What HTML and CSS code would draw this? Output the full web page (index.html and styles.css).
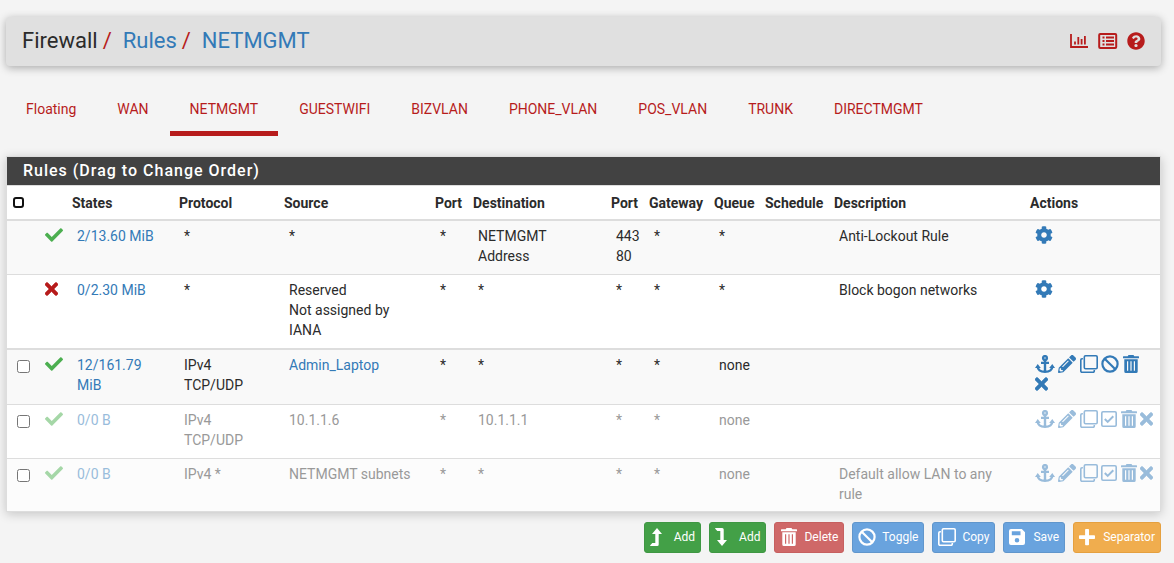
FILE: index.html
```html
<!DOCTYPE html>
<html lang="en">
<head>
<meta charset="utf-8">
<title>Firewall: Rules: NETMGMT</title>
<link rel="stylesheet" href="styles.css">
</head>
<body>
<svg class="sprite" aria-hidden="true">
  <symbol id="check" viewBox="0 0 512 512"><path d="M173.898 439.404l-166.4-166.4c-9.997-9.997-9.997-26.206 0-36.204l36.203-36.204c9.997-9.998 26.207-9.998 36.204 0L192 312.69 432.095 72.596c9.997-9.997 26.207-9.997 36.204 0l36.203 36.204c9.997 9.997 9.997 26.206 0 36.204l-294.4 294.401c-9.998 9.997-26.207 9.997-36.204-.001z"/></symbol>
  <symbol id="times" viewBox="0 70 352 372"><path stroke="currentColor" stroke-width="14" d="M242.72 256l100.07-100.07c12.28-12.28 12.28-32.19 0-44.48l-22.24-22.24c-12.28-12.28-32.19-12.28-44.48 0L176 189.28 75.93 89.21c-12.28-12.28-32.19-12.28-44.48 0L9.21 111.45c-12.28 12.28-12.28 32.19 0 44.48L109.28 256 9.21 356.07c-12.28 12.28-12.28 32.19 0 44.48l22.24 22.24c12.28 12.28 32.2 12.28 44.48 0L176 322.72l100.07 100.07c12.28 12.28 32.2 12.28 44.48 0l22.24-22.24c12.28-12.28 12.28-32.19 0-44.48L242.72 256z"/></symbol>
  <symbol id="cog" viewBox="0 0 512 512"><path d="M487.4 315.7l-42.6-24.6c4.3-23.2 4.3-47 0-70.2l42.6-24.6c4.9-2.8 7.1-8.6 5.5-14-11.1-35.6-30-67.8-54.7-94.6-3.8-4.1-10-5.1-14.8-2.3L380.8 110c-17.9-15.4-38.5-27.3-60.8-35.1V25.8c0-5.6-3.9-10.5-9.4-11.7-36.7-8.2-74.3-7.8-109.2 0-5.5 1.2-9.4 6.1-9.4 11.7V75c-22.2 7.9-42.8 19.8-60.8 35.1L88.7 85.5c-4.9-2.8-11-1.9-14.8 2.3-24.7 26.7-43.6 58.9-54.7 94.6-1.7 5.4.6 11.2 5.5 14L67.3 221c-4.3 23.2-4.3 47 0 70.2l-42.6 24.6c-4.9 2.8-7.1 8.6-5.5 14 11.1 35.6 30 67.8 54.7 94.6 3.8 4.1 10 5.1 14.8 2.3l42.6-24.6c17.9 15.4 38.5 27.3 60.8 35.1v49.2c0 5.6 3.9 10.5 9.4 11.7 36.7 8.2 74.3 7.8 109.2 0 5.5-1.2 9.4-6.1 9.4-11.7v-49.2c22.2-7.9 42.8-19.8 60.8-35.1l42.6 24.6c4.9 2.8 11 1.9 14.8-2.3 24.7-26.7 43.6-58.9 54.7-94.6 1.5-5.5-.7-11.3-5.6-14.1zM256 336c-44.1 0-80-35.9-80-80s35.9-80 80-80 80 35.9 80 80-35.9 80-80 80z"/></symbol>
  <symbol id="help" viewBox="0 0 512 512"><path d="M504 256c0 136.997-111.043 248-248 248S8 392.997 8 256C8 119.083 119.043 8 256 8s248 111.083 248 248zM262.655 90c-54.497 0-89.255 22.957-116.549 63.758-3.536 5.286-2.353 12.415 2.715 16.258l34.699 26.31c5.205 3.947 12.621 3.008 16.665-2.122 17.864-22.658 30.113-35.797 57.303-35.797 20.429 0 45.698 13.148 45.698 32.958 0 14.976-12.363 22.667-32.534 33.976C247.128 238.528 216 254.941 216 296v4c0 6.627 5.373 12 12 12h56c6.627 0 12-5.373 12-12v-1.333c0-28.462 83.186-29.647 83.186-106.667 0-58.002-60.165-102-116.531-102zM256 338c-25.365 0-46 20.635-46 46 0 25.364 20.635 46 46 46s46-20.636 46-46c0-25.365-20.635-46-46-46z"/></symbol>
  <symbol id="pencil" viewBox="0 0 512 512"><path d="M497.9 142.1l-46.1 46.1c-4.7 4.7-12.3 4.7-17 0l-111-111c-4.7-4.7-4.7-12.3 0-17l46.1-46.1c18.7-18.7 49.1-18.7 67.9 0l60.1 60.1c18.8 18.7 18.8 49.1 0 67.9zM284.2 99.8L21.6 362.4.4 483.9c-2.9 16.4 11.4 30.6 27.8 27.8l121.5-21.3 262.6-262.6c4.7-4.7 4.7-12.3 0-17l-111-111c-4.8-4.7-12.4-4.7-17.1 0zM124.1 339.9c-5.5-5.5-5.5-14.3 0-19.8l154-154c5.5-5.5 14.3-5.5 19.8 0s5.5 14.3 0 19.8l-154 154c-5.5 5.5-14.3 5.5-19.8 0zM88 424h48v36.3l-64.5 11.3-31.1-31.1L51.7 376H88v48z"/></symbol>
  <symbol id="anchor" viewBox="0 0 20 18"><g fill="none" stroke="currentColor" stroke-width="2.4"><circle cx="10" cy="3" r="1.900"/><path d="M10 5v12M6 7.900h8M2.600 11.500c.3 3.400 3.400 5.300 7.400 5.300s7.100-1.900 7.400-5.300"/></g><path d="M2.700 9 5.800 13H0zM17.300 9l2.700 4h-5.800z"/></symbol>
  <symbol id="clone" viewBox="0 0 18 18"><g fill="none" stroke="currentColor" stroke-width="1.6"><rect x="4.300" y=".8" width="12.900" height="12.900" rx="1.200"/><path d="M2.900 3.700H2A1.200 1.200 0 0 0 .8 4.900V16A1.200 1.200 0 0 0 2 17.200h11.100a1.200 1.200 0 0 0 1.200-1.200v-.9"/></g></symbol>
  <symbol id="ban" viewBox="0 0 18 18"><g fill="none" stroke="currentColor" stroke-width="2.2"><circle cx="9" cy="9" r="7.600"/><path d="m3.700 3.700 10.600 10.600"/></g></symbol>
  <symbol id="trash" viewBox="0 0 16 18"><path fill-rule="evenodd" d="M5.500 0h5l.8 1.200H15.500a.5.5 0 0 1 .5.5v1.600H0V1.700a.5.5 0 0 1 .5-.5h4.200zM1.300 4.200h13.400v12.200a1.600 1.600 0 0 1-1.600 1.600H2.900a1.600 1.600 0 0 1-1.600-1.600zM4 6.300v9.400h1.200V6.300zm3.400 0v9.400h1.200V6.300zm3.400 0v9.400H12V6.300z"/></symbol>
  <symbol id="tick" viewBox="0 0 16 18"><g fill="none" stroke="currentColor" stroke-width="1.600"><rect x=".8" y="1.800" width="14.400" height="14.400" rx="1.200"/><path d="m3.800 9 2.900 2.900 5.600-5.600" stroke-width="2"/></g></symbol>
  <symbol id="chart" viewBox="0 0 20 18"><path fill="none" stroke="currentColor" stroke-width="1.800" d="M2 2v13h17M6 12.500V9.500M9.300 12.500V5M12.600 12.500V7M15.900 12.500V4"/></symbol>
  <symbol id="list" viewBox="0 0 20 18"><rect x="1.200" y="1.900" width="17" height="14.200" rx="1" fill="none" stroke="currentColor" stroke-width="2"/><path fill="none" stroke="currentColor" stroke-width="1.800" d="M4.500 5.500h2M4.500 9h2M4.500 12.500h2M8 5.500h8M8 9h8M8 12.500h8"/></symbol>
  <symbol id="up" viewBox="0 0 18 18"><path d="M7 0l5 6H8.700v10.500A1.500 1.500 0 0 1 7.200 18H.5L0 17.400 2.300 15h3V6H2z"/></symbol>
  <symbol id="down" viewBox="0 0 18 18"><path d="M7 18l5-6H8.700V1.500A1.500 1.500 0 0 0 7.200 0H.5L0 .6 2.300 3h3v9H2z"/></symbol>
  <symbol id="save" viewBox="0 0 18 18"><path fill-rule="evenodd" d="M2 1h10.800L16 4.200V15a2 2 0 0 1-2 2H2a2 2 0 0 1-2-2V3a2 2 0 0 1 2-2zm.8 2.300v4h8.700v-4zM8 10a2.300 2.300 0 1 0 0 4.600A2.300 2.300 0 0 0 8 10z"/></symbol>
  <symbol id="plus" viewBox="0 0 18 18"><path d="M6.900 1h2.300a.8.8 0 0 1 .8.8v5.400h5.200a.8.8 0 0 1 .8.800v2.300a.8.800 0 0 1-.8.800H10v5.400a.8.800 0 0 1-.8.800H6.900a.8.800 0 0 1-.8-.8v-5.400H.8A.8.800 0 0 1 0 10.300V8a.8.800 0 0 1 .8-.8h5.300V1.800A.8.800 0 0 1 6.900 1z"/></symbol>
</svg>

<header class="page-header">
  <ol class="breadcrumb">
    <li>Firewall</li>
    <li><a href="#">Rules</a></li>
    <li><a href="#">NETMGMT</a></li>
  </ol>
  <nav class="header-links" aria-label="Page links">
    <a href="#" aria-label="Status"><svg class="icon wide"><use href="#chart"/></svg></a>
    <a href="#" aria-label="Logs"><svg class="icon wide"><use href="#list"/></svg></a>
    <a href="#" aria-label="Help"><svg class="icon"><use href="#help"/></svg></a>
  </nav>
</header>

<nav class="tabs" aria-label="Interfaces">
  <a href="#">Floating</a>
  <a href="#">WAN</a>
  <a href="#" class="active" aria-current="page">NETMGMT</a>
  <a href="#">GUESTWIFI</a>
  <a href="#">BIZVLAN</a>
  <a href="#">PHONE_VLAN</a>
  <a href="#">POS_VLAN</a>
  <a href="#">TRUNK</a>
  <a href="#">DIRECTMGMT</a>
</nav>

<main>
  <section class="panel">
    <h2 class="panel-title">Rules (Drag to Change Order)</h2>
    <table class="rules">
      <colgroup>
        <col class="c-select"><col class="c-status"><col class="c-states"><col class="c-protocol"><col class="c-source"><col class="c-port"><col class="c-dest"><col class="c-port"><col class="c-gateway"><col class="c-queue"><col class="c-schedule"><col><col class="c-actions">
      </colgroup>
      <thead>
        <tr>
          <th><input type="checkbox" class="select-all" aria-label="Select all"></th>
          <th></th>
          <th>States</th><th>Protocol</th><th>Source</th><th>Port</th><th>Destination</th><th>Port</th><th>Gateway</th><th>Queue</th><th>Schedule</th><th>Description</th><th>Actions</th>
        </tr>
      </thead>
      <tbody>
        <tr class="shaded">
          <td></td>
          <td><svg class="icon pass"><use href="#check"/></svg></td>
          <td><a href="#">2/13.60 MiB</a></td>
          <td>*</td><td>*</td><td>*</td><td>NETMGMT Address</td><td>443<br>80</td><td>*</td><td>*</td><td></td>
          <td>Anti-Lockout Rule</td>
          <td><a href="#" aria-label="Settings"><svg class="icon"><use href="#cog"/></svg></a></td>
        </tr>
        <tr>
          <td></td>
          <td><svg class="icon narrow block"><use href="#times"/></svg></td>
          <td><a href="#">0/2.30 MiB</a></td>
          <td>*</td><td>Reserved<br>Not assigned by IANA</td><td>*</td><td>*</td><td>*</td><td>*</td><td>*</td><td></td>
          <td>Block bogon networks</td>
          <td><a href="#" aria-label="Settings"><svg class="icon"><use href="#cog"/></svg></a></td>
        </tr>
      </tbody>
      <tbody class="user-rules">
        <tr class="shaded">
          <td><input type="checkbox" aria-label="Select rule 1"></td>
          <td><svg class="icon pass"><use href="#check"/></svg></td>
          <td><a href="#">12/161.79 MiB</a></td>
          <td>IPv4 TCP/UDP</td><td><a href="#">Admin_Laptop</a></td><td>*</td><td>*</td><td>*</td><td>*</td><td>none</td><td></td><td></td>
          <td>
            <a href="#" aria-label="Move"><svg class="icon wide"><use href="#anchor"/></svg></a>
            <a href="#" aria-label="Edit"><svg class="icon"><use href="#pencil"/></svg></a>
            <a href="#" aria-label="Copy"><svg class="icon"><use href="#clone"/></svg></a>
            <a href="#" aria-label="Disable"><svg class="icon"><use href="#ban"/></svg></a>
            <a href="#" aria-label="Delete"><svg class="icon mid"><use href="#trash"/></svg></a>
            <a href="#" aria-label="Clear states"><svg class="icon narrow"><use href="#times"/></svg></a>
          </td>
        </tr>
        <tr class="disabled">
          <td><input type="checkbox" aria-label="Select rule 2"></td>
          <td><svg class="icon pass"><use href="#check"/></svg></td>
          <td><a href="#">0/0 B</a></td>
          <td>IPv4 TCP/UDP</td><td>10.1.1.6</td><td>*</td><td>10.1.1.1</td><td>*</td><td>*</td><td>none</td><td></td><td></td>
          <td>
            <a href="#" aria-label="Move"><svg class="icon wide"><use href="#anchor"/></svg></a>
            <a href="#" aria-label="Edit"><svg class="icon"><use href="#pencil"/></svg></a>
            <a href="#" aria-label="Copy"><svg class="icon"><use href="#clone"/></svg></a>
            <a href="#" aria-label="Enable"><svg class="icon mid"><use href="#tick"/></svg></a>
            <a href="#" aria-label="Delete"><svg class="icon mid"><use href="#trash"/></svg></a>
            <a href="#" aria-label="Clear states"><svg class="icon narrow"><use href="#times"/></svg></a>
          </td>
        </tr>
        <tr class="shaded disabled">
          <td><input type="checkbox" aria-label="Select rule 3"></td>
          <td><svg class="icon pass"><use href="#check"/></svg></td>
          <td><a href="#">0/0 B</a></td>
          <td>IPv4 *</td><td>NETMGMT subnets</td><td>*</td><td>*</td><td>*</td><td>*</td><td>none</td><td></td>
          <td>Default allow LAN to any rule</td>
          <td>
            <a href="#" aria-label="Move"><svg class="icon wide"><use href="#anchor"/></svg></a>
            <a href="#" aria-label="Edit"><svg class="icon"><use href="#pencil"/></svg></a>
            <a href="#" aria-label="Copy"><svg class="icon"><use href="#clone"/></svg></a>
            <a href="#" aria-label="Enable"><svg class="icon mid"><use href="#tick"/></svg></a>
            <a href="#" aria-label="Delete"><svg class="icon mid"><use href="#trash"/></svg></a>
            <a href="#" aria-label="Clear states"><svg class="icon narrow"><use href="#times"/></svg></a>
          </td>
        </tr>
      </tbody>
    </table>
  </section>

  <div class="actions">
    <button type="button" class="btn add"><svg class="icon"><use href="#up"/></svg>Add</button>
    <button type="button" class="btn add"><svg class="icon"><use href="#down"/></svg>Add</button>
    <button type="button" class="btn delete"><svg class="icon"><use href="#trash"/></svg>Delete</button>
    <button type="button" class="btn info"><svg class="icon"><use href="#ban"/></svg>Toggle</button>
    <button type="button" class="btn info"><svg class="icon"><use href="#clone"/></svg>Copy</button>
    <button type="button" class="btn info"><svg class="icon"><use href="#save"/></svg>Save</button>
    <button type="button" class="btn separator"><svg class="icon"><use href="#plus"/></svg>Separator</button>
  </div>
</main>
</body>
</html>
```
FILE: styles.css
```css
* { box-sizing: border-box; }

body {
  margin: 0;
  padding: 17px 13px 10px 6px;
  background: #f4f4f4;
  color: #2b2b2b;
  font: 14px/20px Roboto, sans-serif;
}

a { color: #337ab7; text-decoration: none; }

.sprite { display: none; }

.icon {
  width: 18px;
  height: 18px;
  fill: currentColor;
  vertical-align: -3px;
}
.icon.wide { width: 20px; }
.icon.mid { width: 16px; }
.icon.narrow { width: 13px; }
.icon.pass { color: #4caf50; }
.icon.block { color: #b71c1c; }

.page-header {
  display: flex;
  align-items: center;
  justify-content: space-between;
  padding: 9px 16px 11px;
  border-radius: 4px;
  background: #e0e0e0;
  box-shadow: 0 2px 8px rgba(0, 0, 0, .3);
}

.breadcrumb {
  display: flex;
  margin: 0;
  padding: 0;
  list-style: none;
  font-size: 22px;
  line-height: 29px;
}
.breadcrumb li + li::before {
  content: "/";
  padding: 0 11px 0 5px;
  color: #b71c1c;
}

.header-links {
  display: flex;
  gap: 9px;
}
.header-links a { color: #b71c1c; line-height: 18px; }
.header-links .icon { display: block; }

.tabs {
  display: flex;
  gap: 1px;
  margin-top: 22px;
}
.tabs a {
  padding: 11px 20px 12px;
  border-bottom: 5px solid transparent;
  color: #b71c1c;
}
.tabs .active { border-color: #b71c1c; }

.panel {
  margin-top: 20px;
  border: 1px solid #ddd;
  background: #fff;
  box-shadow: 0 2px 10px rgba(0, 0, 0, .2);
}

.panel-title {
  margin: 0;
  padding: 4px 16px;
  background: #424242;
  color: #fff;
  font-size: 16px;
  font-weight: 500;
  line-height: 20px;
  letter-spacing: 1px;
}

.rules {
  width: 100%;
  table-layout: fixed;
  border-collapse: separate;
  border-spacing: 0;
  border-top: 1px solid #ddd;
}
.c-select { width: 28px; }
.c-status { width: 32px; }
.c-states { width: 107px; }
.c-protocol { width: 105px; }
.c-source { width: 151px; }
.c-port { width: 38px; }
.c-dest { width: 138px; }
.c-gateway { width: 65px; }
.c-queue { width: 51px; }
.c-schedule { width: 69px; }
.c-actions { width: 135px; }

.rules th {
  padding: 7px 0 6px 5px;
  border-bottom: 2px solid #ddd;
  font-weight: 700;
  text-align: left;
  vertical-align: top;
}
.rules td {
  padding: 5px 10px 8px;
  vertical-align: top;
}
.rules td:last-child { padding-right: 5px; }
.rules tr + tr td { border-top: 1px solid #ddd; }
.user-rules tr:first-child td {
  padding-bottom: 9px;
  border-top: 2px solid #ddd;
}
.user-rules tr:last-child td { padding-bottom: 7px; }
.shaded td { background: #f9f9f9; }
.shaded.disabled td { background: #fcfcfc; }
.disabled td { color: #999; }
.disabled a { color: #99bcdb; }
.disabled .pass { color: #a5d7a7; }

.rules input {
  width: 13px;
  height: 13px;
  margin: 0;
  vertical-align: -3px;
}
.rules .select-all {
  width: 11px;
  height: 11px;
  margin-left: 1px;
  border: 2px solid #111;
  border-radius: 3px;
  background: #fff;
  appearance: none;
  vertical-align: 0;
}

.actions {
  display: flex;
  justify-content: flex-end;
  gap: 8px;
  margin-top: 10px;
}
.btn {
  display: flex;
  align-items: center;
  gap: 6px;
  padding: 5px 5px 6px;
  border: 1px solid;
  border-radius: 3px;
  color: #fff;
  font: 12px/18px Roboto, sans-serif;
}
.btn.add { background: #43a047; border-color: #3f9743; }
.btn.delete { background: #cf6868; border-color: #c65f5f; }
.btn.info { background: #69a3de; border-color: #6096cc; }
.btn.separator { background: #f0ad4e; border-color: #e5a03f; }
```
